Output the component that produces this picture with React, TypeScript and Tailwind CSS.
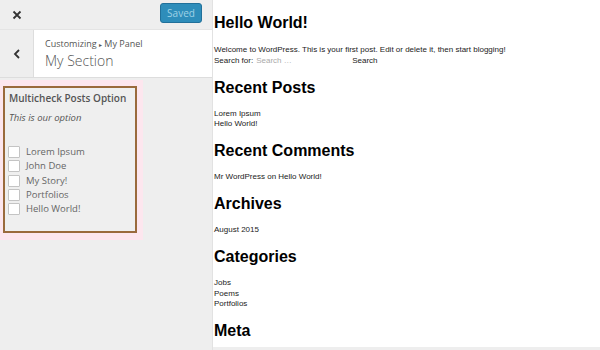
import React from "react";

const options = ["Lorem Ipsum", "John Doe", "My Story!", "Portfolios", "Hello World!"];

function Heading({children}: {children: React.ReactNode}) {
  return <h2 className="text-[16px] leading-[20px] font-bold text-black mt-[11.5px] mb-[11px]">{children}</h2>;
}

function Line({children}: {children: React.ReactNode}) {
  return <div className="text-[8px] leading-[10.5px] text-[#222]">{children}</div>;
}

export default function App() {
  return (
    <div className="w-[600px] h-[350px] flex overflow-hidden bg-white">
      {/* Customizer sidebar */}
      <aside
        className="w-[213px] h-full bg-[#eeeeee] border-r border-[#e2e2e2] flex flex-col text-[#555]"
        style={{fontFamily: '"Open Sans", "Noto Sans", sans-serif'}}
      >
        <div className="h-[30px] flex items-center justify-between border-b border-[#e4e4e4]">
          <div className="w-[34px] h-full flex items-center justify-center">
            <svg width="10" height="10" viewBox="0 0 10 10">
              <path d="M1.5 1.5 L8.5 8.5 M8.5 1.5 L1.5 8.5" stroke="#333" strokeWidth="1.8" />
            </svg>
          </div>
          <button className="mr-[10px] mt-[-4px] h-[20px] w-[42px] rounded-[3px] bg-[#2e8dba] border border-[#21709a] text-[10px] text-[#9fd2e6] leading-none">
            Saved
          </button>
        </div>

        <div className="h-[48px] flex border-b border-[#ddd]">
          <div className="w-[34px] flex items-center justify-center border-r border-[#ddd]">
            <svg width="8" height="10" viewBox="0 0 8 10">
              <path d="M6 1 L2 5 L6 9" stroke="#333" strokeWidth="1.8" fill="none" />
            </svg>
          </div>
          <div className="flex-1 bg-white pl-[11px] pt-[8px]">
            <div className="text-[9px] leading-[12px] text-[#555]">
              Customizing <span className="text-[6px] align-middle">▸</span> My Panel
            </div>
            <div className="text-[14px] leading-[20px] font-light text-[#555]">My Section</div>
          </div>
        </div>

        <div className="mt-[2px] w-[143px] bg-[#fde6ee] pl-[3px] pr-[6px] pt-[6px] pb-[7px]">
          <div className="h-[147px] border-2 border-[#9a6a3c] bg-[#efefef] pl-[3px] pt-[3px]">
            <div className="pl-[1px] text-[10px] leading-[14px] font-semibold text-[#555] whitespace-nowrap">
              Multicheck Posts Option
            </div>
            <div className="pl-[1px] mt-[6px] text-[9.5px] leading-[13px] italic text-[#555] whitespace-nowrap">
              This is our option
            </div>
            <ul className="mt-[21px] flex flex-col">
              {options.map((o) => (
                <li key={o} className="h-[14.25px] flex items-center gap-[6px]">
                  <span className="w-[12px] h-[12px] bg-white border border-[#c4c4c4] rounded-[1px]" />
                  <span className="text-[9.5px] text-[#666]">{o}</span>
                </li>
              ))}
            </ul>
          </div>
        </div>
      </aside>

      {/* Preview */}
      <main
        className="flex-1 h-full flex flex-col"
        style={{fontFamily: '"Liberation Sans", Arial, sans-serif'}}
      >
        <div className="flex-1 pl-[1px] overflow-hidden">
          <h1 className="text-[16px] leading-[20px] font-bold text-black mt-[13px] mb-[12px]">Hello World!</h1>
          <Line>Welcome to WordPress. This is your first post. Edit or delete it, then start blogging!</Line>
          <div className="flex items-center text-[8px] leading-[10.5px] text-[#222]">
            <span>Search for:</span>
            <span className="ml-[3px] w-[96px] text-[#aaa]">Search …</span>
            <span>Search</span>
          </div>

          <Heading>Recent Posts</Heading>
          <Line>Lorem Ipsum</Line>
          <Line>Hello World!</Line>

          <Heading>Recent Comments</Heading>
          <Line>Mr WordPress on Hello World!</Line>

          <Heading>Archives</Heading>
          <Line>August 2015</Line>

          <Heading>Categories</Heading>
          <Line>Jobs</Line>
          <Line>Poems</Line>
          <Line>Portfolios</Line>

          <Heading>Meta</Heading>
        </div>
        <div className="h-[3px] bg-[#eeeeee]" />
      </main>
    </div>
  );
}
